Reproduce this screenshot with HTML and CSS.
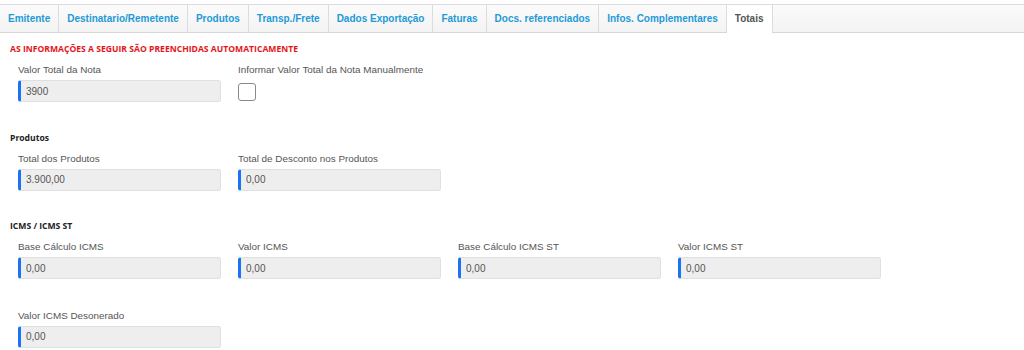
FILE: index.html
```html
<!DOCTYPE html>
<html lang="pt-BR">

<head>
    <meta charset="UTF-8">
    <meta name="viewport" content="width=device-width, initial-scale=1.0">
    <title>Totais da Nota</title>
    <link rel="stylesheet" href="styles.css">
</head>

<body>
    <!-- Tabs -->
    <ul class="tabs">
        <li class="tab">Emitente</li>
        <li class="tab">Destinatario/Remetente</li>
        <li class="tab">Produtos</li>
        <li class="tab">Transp./Frete</li>
        <li class="tab">Dados Exportação</li>
        <li class="tab">Faturas</li>
        <li class="tab">Docs. referenciados</li>
        <li class="tab">Infos. Complementares</li>
        <li class="tab active">Totais</li>
    </ul>

    <div class="content">
        <h4 class="section-title alert">AS INFORMAÇÕES A SEGUIR SÃO PREENCHIDAS AUTOMATICAMENTE</h4>
        <div class="row">
            <div class="field">
                <label>Valor Total da Nota</label>
                <input type="text" class="form-control" value="3900" readonly>
            </div>
            <div class="field">
                <label>Informar Valor Total da Nota Manualmente</label>
                <span class="checkbox"></span>
            </div>
        </div>

        <h4 class="section-title">Produtos</h4>
        <div class="row">
            <div class="field">
                <label>Total dos Produtos</label>
                <input type="text" class="form-control" value="3.900,00" readonly>
            </div>
            <div class="field">
                <label>Total de Desconto nos Produtos</label>
                <input type="text" class="form-control" value="0,00" readonly>
            </div>
        </div>

        <h4 class="section-title">ICMS / ICMS ST</h4>
        <div class="row">
            <div class="field">
                <label>Base Cálculo ICMS</label>
                <input type="text" class="form-control" value="0,00" readonly>
            </div>
            <div class="field">
                <label>Valor ICMS</label>
                <input type="text" class="form-control" value="0,00" readonly>
            </div>
            <div class="field">
                <label>Base Cálculo ICMS ST</label>
                <input type="text" class="form-control" value="0,00" readonly>
            </div>
            <div class="field">
                <label>Valor ICMS ST</label>
                <input type="text" class="form-control" value="0,00" readonly>
            </div>
        </div>
        <div class="row">
            <div class="field">
                <label>Valor ICMS Desonerado</label>
                <input type="text" class="form-control" value="0,00" readonly>
            </div>
        </div>
    </div>
</body>

</html>
```

FILE: styles.css
```css
:root {
    --tab-color: #1f9ad6;
    --label-color: #555;
    --accent: #1a73f5;
    --alert: #e3161b;
}

* {
    margin: 0;
    padding: 0;
    box-sizing: border-box;
}

body {
    background: #fff;
    padding-top: 4px;
    font-family: 'Liberation Sans', Arial, sans-serif;
    overflow: hidden;
}

/* Tabs */
.tabs {
    list-style: none;
    display: flex;
    height: 29px;
    border-top: 1px solid #dcdcdc;
    border-bottom: 1px solid #d6d6d6;
    background: linear-gradient(#fbfbfb, #f3f3f3);
}

.tab {
    padding: 0 8px;
    line-height: 27px;
    font-size: 10px;
    font-weight: bold;
    color: var(--tab-color);
    border-right: 1px solid #dcdcdc;
    white-space: nowrap;
}

.tab.active {
    background: #fff;
    color: #555;
    height: 28px;
}

/* Content */
.content {
    padding: 10px 0 0 10px;
}

.section-title {
    font-family: 'Open Sans', sans-serif;
    font-size: 8.6px;
    font-weight: 700;
    line-height: 12px;
    color: #222;
    margin-bottom: 8px;
}

.section-title.alert {
    color: var(--alert);
    margin-bottom: 8px;
}

.row {
    display: flex;
    gap: 17px;
    padding-left: 8px;
    margin-bottom: 29.5px;
}

.row:last-child {
    margin-bottom: 0;
}

.field {
    width: 203px;
    display: flex;
    flex-direction: column;
}

.field label {
    font-size: 9.9px;
    line-height: 14px;
    color: var(--label-color);
    margin-bottom: 3px;
    white-space: nowrap;
}

.form-control {
    height: 22px;
    width: 100%;
    background: #eee;
    border: 1px solid #e0e0e0;
    border-left: 3px solid var(--accent);
    border-radius: 3px;
    padding: 0 5px;
    font-family: 'Liberation Sans', Arial, sans-serif;
    font-size: 10px;
    color: #555;
    outline: none;
}

.checkbox {
    display: block;
    width: 18px;
    height: 18px;
    margin-top: 3px;
    border: 1.5px solid #8a8a8a;
    border-radius: 3px;
    background: #fff;
}
```
